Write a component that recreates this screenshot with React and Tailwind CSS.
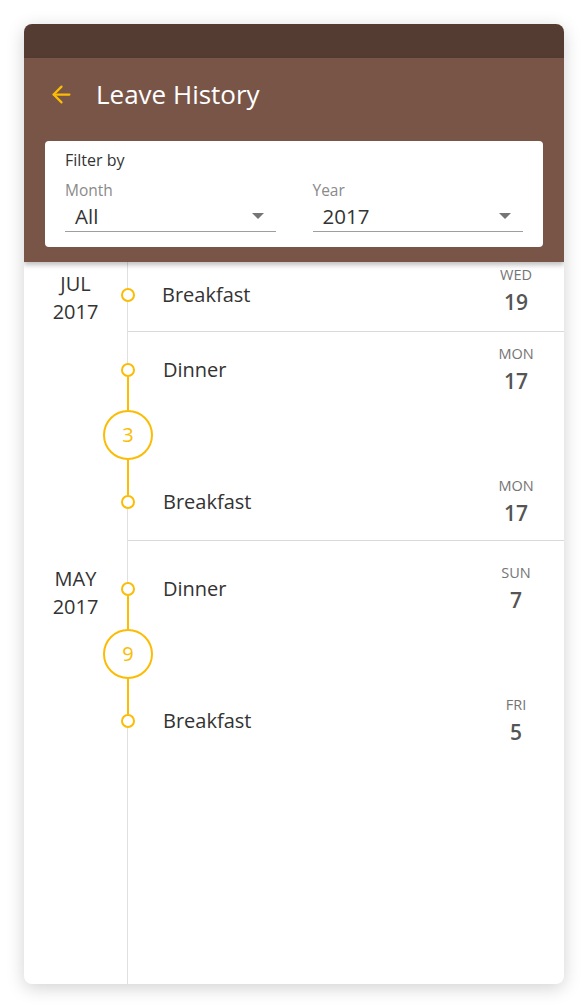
import { ArrowLeft } from "lucide-react";

const font = { fontFamily: '"Open Sans", "Noto Sans", sans-serif' };

function Dot() {
  return <div className="w-[14px] h-[14px] rounded-full border-2 border-[#fbbc05] bg-white shrink-0" />;
}

function DayCol({ day, num }) {
  return (
    <div className="w-[60px] flex flex-col items-center shrink-0">
      <div className="text-[14.5px] leading-[20px] text-[#757575]">{day}</div>
      <div className="text-[21px] leading-[27px] font-semibold text-[#555] mt-[4px]">{num}</div>
    </div>
  );
}

function Select({ label, value }) {
  return (
    <div>
      <div className="text-[15.5px] leading-[20px] text-[#8a8a8a]">{label}</div>
      <div className="flex items-center justify-between border-b-[1.5px] border-[#9e9e9e] pl-[10px] pr-[12px] h-[32px]">
        <span className="text-[20.5px] leading-[28px] text-[#333]">{value}</span>
        <span className="w-0 h-0 border-l-[6px] border-r-[6px] border-t-[6px] border-l-transparent border-r-transparent border-t-[#757575]" />
      </div>
    </div>
  );
}

// single leave row (one day)
function SingleRow({ title, day, num }) {
  return (
    <div className="flex h-[70px] border-b border-[#d9d9d9]">
      <div className="-ml-[25px] w-[50px] flex flex-col items-center pt-[26px] shrink-0">
        <Dot />
      </div>
      <div className="flex-1 flex justify-between pl-[9px] pr-[18px] pt-[3px]">
        <div className="text-[20px] leading-[28px] text-[#333] mt-[16px]">{title}</div>
        <DayCol day={day} num={num} />
      </div>
    </div>
  );
}

// leave range with count bubble
function RangeRow({ from, to, count, border }) {
  return (
    <div className={`flex h-[209px] ${border ? "border-b border-[#d9d9d9]" : ""}`}>
      <div className="-ml-[25px] w-[50px] flex flex-col items-center pt-[31px] shrink-0">
        <Dot />
        <div className="w-[2px] h-[33px] bg-[#fbbc05]" />
        <div className="w-[50px] h-[50px] rounded-full border-2 border-[#fbbc05] bg-white flex items-center justify-center text-[20px] text-[#fbbc05]">
          {count}
        </div>
        <div className="w-[2px] h-[35px] bg-[#fbbc05]" />
        <Dot />
      </div>
      <div className="flex-1 flex flex-col pl-[10px] pr-[18px] pt-[12px] gap-[81px]">
        <div className="flex justify-between">
          <div className="text-[20px] leading-[28px] text-[#333] mt-[12px]">{from.title}</div>
          <DayCol day={from.day} num={from.num} />
        </div>
        <div className="flex justify-between">
          <div className="text-[20px] leading-[28px] text-[#333] mt-[12px]">{to.title}</div>
          <DayCol day={to.day} num={to.num} />
        </div>
      </div>
    </div>
  );
}

function MonthLabel({ month, year, pt }) {
  return (
    <div className={`w-[103px] shrink-0 flex flex-col items-center text-[20px] leading-[28px] text-[#333] ${pt}`}>
      <span>{month}</span>
      <span>{year}</span>
    </div>
  );
}

export default function App() {
  return (
    <div className="w-[588px] h-[1008px] bg-white pt-[24px] px-[24px]" style={font}>
      <div className="w-[540px] h-[960px] bg-white rounded-[8px] overflow-hidden shadow-[0_4px_18px_rgba(0,0,0,0.18)] flex flex-col">
        {/* status bar */}
        <div className="h-[34px] bg-[#553c33] shrink-0" />

        {/* Header */}
        <div className="bg-[#795548] px-[21px] pb-[15px] shadow-[0_3px_5px_rgba(0,0,0,0.25)] relative z-10 shrink-0">
          <div className="h-[72px] mb-[11px] flex items-center">
            <ArrowLeft size={27} strokeWidth={2} className="text-[#fbbc05] ml-[3px]" />
            <h1 className="ml-[21px] text-[26px] leading-[34px] text-white">Leave History</h1>
          </div>
          <div className="bg-white rounded-[4px] px-[20px] pt-[9px] pb-[15px]">
            <div className="text-[16px] leading-[20px] text-[#333]">Filter by</div>
            <div className="grid grid-cols-2 gap-[37px] mt-[10px]">
              <Select label="Month" value="All" />
              <Select label="Year" value="2017" />
            </div>
          </div>
        </div>

        {/* Timeline */}
        <div className="flex-1 flex flex-col">
          <div className="flex">
            <MonthLabel month="JUL" year="2017" pt="pt-[8px]" />
            <div className="flex-1 border-l border-[#e0e0e0]">
              <SingleRow title="Breakfast" day="WED" num="19" />
              <RangeRow
                from={{ title: "Dinner", day: "MON", num: "17" }}
                to={{ title: "Breakfast", day: "MON", num: "17" }}
                count="3"
                border
              />
            </div>
          </div>
          <div className="flex">
            <MonthLabel month="MAY" year="2017" pt="pt-[24px]" />
            <div className="flex-1 border-l border-[#e0e0e0]">
              <div className="h-[10px]" />
              <RangeRow
                from={{ title: "Dinner", day: "SUN", num: "7" }}
                to={{ title: "Breakfast", day: "FRI", num: "5" }}
                count="9"
              />
            </div>
          </div>
          <div className="flex flex-1">
            <div className="w-[103px] shrink-0" />
            <div className="flex-1 border-l border-[#e0e0e0]" />
          </div>
        </div>
      </div>
    </div>
  );
}
